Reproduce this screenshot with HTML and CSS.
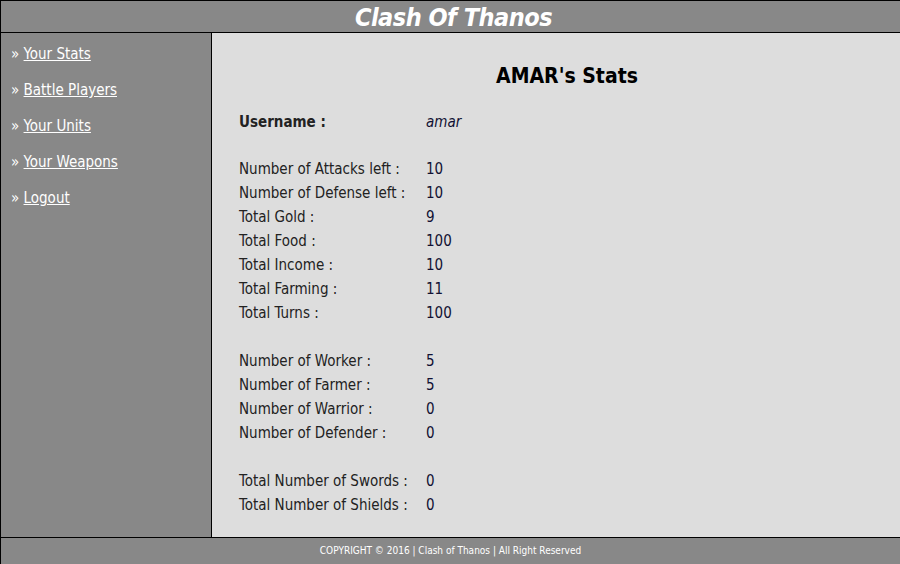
FILE: index.html
```html
<!DOCTYPE html>
<html>
<head>
<meta charset="utf-8">
<title>Clash Of Thanos</title>
<link rel="stylesheet" href="styles.css">
</head>
<body>
<div class="page">
  <header class="header"><h1 class="title">Clash Of Thanos</h1></header>
  <div class="main">
    <nav class="sidebar">
      <ul class="nav">
        <li>» <a href="#">Your Stats</a></li>
        <li>» <a href="#">Battle Players</a></li>
        <li>» <a href="#">Your Units</a></li>
        <li>» <a href="#">Your Weapons</a></li>
        <li>» <a href="#">Logout</a></li>
      </ul>
    </nav>
    <section class="content">
      <h2 class="heading">AMAR's Stats</h2>
      <table class="stats">
        <tr class="user"><td class="label">Username :</td><td class="value">amar</td></tr>
        <tr class="blank first"><td></td><td></td></tr>
        <tr><td class="label">Number of Attacks left :</td><td class="value">10</td></tr>
        <tr><td class="label">Number of Defense left :</td><td class="value">10</td></tr>
        <tr><td class="label">Total Gold :</td><td class="value">9</td></tr>
        <tr><td class="label">Total Food :</td><td class="value">100</td></tr>
        <tr><td class="label">Total Income :</td><td class="value">10</td></tr>
        <tr><td class="label">Total Farming :</td><td class="value">11</td></tr>
        <tr><td class="label">Total Turns :</td><td class="value">100</td></tr>
        <tr class="blank"><td></td><td></td></tr>
        <tr><td class="label">Number of Worker :</td><td class="value">5</td></tr>
        <tr><td class="label">Number of Farmer :</td><td class="value">5</td></tr>
        <tr><td class="label">Number of Warrior :</td><td class="value">0</td></tr>
        <tr><td class="label">Number of Defender :</td><td class="value">0</td></tr>
        <tr class="blank"><td></td><td></td></tr>
        <tr><td class="label">Total Number of Swords :</td><td class="value">0</td></tr>
        <tr><td class="label">Total Number of Shields :</td><td class="value">0</td></tr>
      </table>
    </section>
  </div>
  <footer class="footer">COPYRIGHT © 2016 | Clash of Thanos | All Right Reserved</footer>
</div>
</body>
</html>
```
FILE: styles.css
```css
html, body {
  margin: 0;
  padding: 0;
}
body {
  font-family: "DejaVu Sans Condensed", "DejaVu Sans", sans-serif;
  background: #dddddd;
}
.page {
  width: 900px;
  height: 564px;
  display: flex;
  flex-direction: column;
  box-sizing: border-box;
  border-left: 1px solid #000;
  overflow: hidden;
}
.header {
  height: 31px;
  flex: none;
  background: #888888;
  border-top: 1px solid #000;
  border-bottom: 1px solid #000;
  display: flex;
  align-items: center;
  justify-content: center;
  padding-left: 6px;
}
.title {
  margin: 0;
  color: #fff;
  font-size: 25px;
  font-weight: bold;
  font-style: italic;
  letter-spacing: -0.5px;
  line-height: 31px;
  position: relative;
  top: 1px;
}
.main {
  display: flex;
  height: 504px;
  flex: none;
}
.sidebar {
  width: 210px;
  flex: none;
  background: #888888;
  border-right: 1px solid #000;
}
.nav {
  list-style: none;
  margin: 0;
  padding: 12px 0 0 10px;
}
.nav li {
  color: #fff;
  font-size: 15px;
  line-height: 18px;
  margin-bottom: 18px;
}
.nav a {
  color: #fff;
  text-decoration: underline;
}
.content {
  flex: 1;
  background: #dddddd;
  padding: 0 5px 0 27px;
}
.heading {
  margin: 0;
  box-sizing: border-box;
  text-align: center;
  font-size: 21px;
  color: #000;
  height: 77px;
  padding-top: 28px;
  line-height: 30px;
}
.stats {
  border-collapse: collapse;
  margin-top: 0;
}
.stats td {
  padding: 0;
  height: 24px;
  line-height: 24px;
  font-size: 15px;
  vertical-align: middle;
}
.stats .first td {
  height: 23px;
}
.label {
  width: 187px;
  color: #222;
}
.value {
  color: #111133;
}
.user .label {
  font-weight: bold;
}
.user .value {
  font-style: italic;
}
.footer {
  flex: 1;
  background: #888888;
  border-top: 1px solid #000;
  color: #fff;
  font-size: 10px;
  text-align: center;
  line-height: 26px;
}
```
